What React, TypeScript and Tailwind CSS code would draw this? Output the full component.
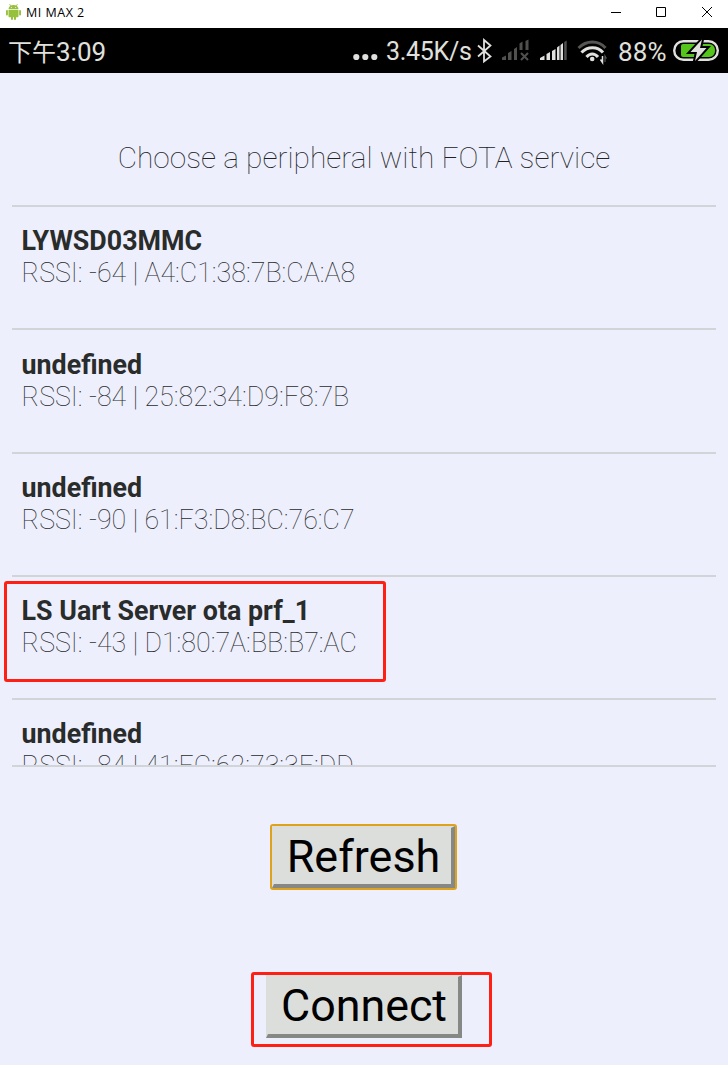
import React from "react";

const devices = [
  { name: "LYWSD03MMC", info: "RSSI: -64 | A4:C1:38:7B:CA:A8" },
  { name: "undefined", info: "RSSI: -84 | 25:82:34:D9:F8:7B" },
  { name: "undefined", info: "RSSI: -90 | 61:F3:D8:BC:76:C7" },
  { name: "LS Uart Server ota prf_1", info: "RSSI: -43 | D1:80:7A:BB:B7:AC", marked: true },
  { name: "undefined", info: "RSSI: -84 | 41:EC:62:73:3E:DD" },
];

function TitleBar() {
  return (
    <div className="flex h-7 items-start bg-white">
      <svg className="ml-[6px] mt-[3px] shrink-0" width="15" height="18" viewBox="0 0 15 18" fill="#97c03d">
        <path d="M3.5 1 4.7 3M11.5 1 10.3 3" stroke="#97c03d" strokeWidth=".8" />
        <path d="M2.5 6.2C2.5 3.6 4.7 2 7.5 2s5 1.6 5 4.2z" />
        <path d="M2.5 7h10v6.3a1 1 0 0 1-1 1H10V16a1 1 0 0 1-2 0v-1.700H7V16a1 1 0 0 1-2 0v-1.700H3.500a1 1 0 0 1-1-1z" />
        <rect x="0" y="7" width="1.900" height="5.500" rx=".9" />
        <rect x="13.100" y="7" width="1.900" height="5.500" rx=".9" />
        <circle cx="5.300" cy="4.400" r=".5" fill="#fff" />
        <circle cx="9.700" cy="4.400" r=".5" fill="#fff" />
      </svg>
      <span className="ml-[5px] mt-[5px] whitespace-nowrap font-['Open_Sans',sans-serif] text-[12.500px] leading-4 tracking-[0.5px] text-black">MI MAX 2</span>
      <svg className="ml-auto mr-[14px] mt-[6px]" width="104" height="12" viewBox="0 0 104 12" fill="none" stroke="#000">
        <path d="M1 6.500h10M46.500 1.500h9v9h-9zM92 1l10 10M102 1 92 11" />
      </svg>
    </div>
  );
}

function StatusBar() {
  return (
    <div className="flex h-[45px] bg-black font-[Roboto,'Noto_Sans_CJK_SC',sans-serif] text-[26px] leading-[48px] text-[#e0e0de]">
      <span className="ml-2 w-[110px] whitespace-nowrap text-[24px] leading-[48px]">下午<span className="text-[26px]">3:09</span></span>
      <svg className="ml-auto shrink-0" width="34" height="45" viewBox="352 28 34 45" fill="#e0e0de">
        <circle cx="356.300" cy="57" r="3.100" />
        <circle cx="365.300" cy="57" r="3.100" />
        <circle cx="374.300" cy="57" r="3.100" />
      </svg>
      <span className="w-[86px] shrink-0 whitespace-nowrap text-[25px] tracking-[-0.3px]">3.45K/s</span>
      <svg className="shrink-0" width="146" height="45" viewBox="472 28 146 45" fill="none">
        <path d="m478 45.500 12.500 11-6.500 5V40l6.500 5.500-12.500 11" stroke="#e0e0de" strokeWidth="1.800" />
        <path d="M502 60v-2.500l4-2V60zM508 60v-7l3.500-2v9zM514 60V49l3-2v13zM519.500 50v-6.500l3-2V50zM525.500 50V41l3-1.500V50z" fill="#50504f" />
        <path d="m521 53 7 7m0-7-7 7" stroke="#50504f" strokeWidth="2" />
        <path d="M540 60v-2l4.500-2.500V60zM546.500 60v-6l3.500-2v8zM552 60v-9l3.500-2v11zM557 60V47.500l2.500-2V60zM560.500 60V45l2.500-2v17z" fill="#e0e0de" />
        <path d="M564.200 60V42l2.500-1.500V60z" fill="#50504f" />
        <path d="M578.500 48c8-8 20-8 27 0" stroke="#555553" strokeWidth="3" />
        <path d="M581.500 52.500c6-6.500 16-6.500 21.500 0M586.500 57c3.500-4 8-4 11.500 0" stroke="#e0e0de" strokeWidth="3" />
        <circle cx="592.200" cy="59" r="2.300" fill="#e0e0de" />
        <path d="M602.500 56v6.500l-2-3" stroke="#e0e0de" strokeWidth="1.500" />
        <path d="M605 62v-6l1.500 2.500" stroke="#555553" strokeWidth="1.200" />
      </svg>
      <span className="w-[54px] shrink-0 whitespace-nowrap tracking-[0.15px]">88%</span>
      <svg className="mr-[8px] shrink-0" width="48" height="45" viewBox="672 28 48 45" fill="none">
        <rect x="674.200" y="41.200" width="43.600" height="18.600" rx="9.300" stroke="#e0e0de" strokeWidth="2.400" />
        <path d="M683 44h26c4 0 6 3 6 6.500s-2 6.500-6 6.500h-26q-2 0-2-2v-9q0-2 2-2z" fill="#55c51b" />
        <path d="M702 39.500 690.500 52h6.500l-2 9 11.500-13h-6.500z" fill="#000" stroke="#000" strokeWidth="4" />
        <path d="M702 39.500 690.500 52h6.500l-2 9 11.500-13h-6.500z" fill="#e0e0de" />
      </svg>
    </div>
  );
}

export default function App() {
  return (
    <div className="flex h-[1065px] w-[728px] flex-col overflow-hidden bg-[#eeeffd] font-[Roboto,sans-serif]">
      <TitleBar />
      <StatusBar />
      <h1 className="h-[132px] pt-[67px] text-center text-[29.850px] font-thin leading-[36px] text-[#202322]">
        Choose a peripheral with FOTA service
      </h1>
      <ul className="mx-3 h-[562px] overflow-hidden border-b-2 border-[#d2d5d7]">
        {devices.map((d, i) => (
          <li key={i} className="relative h-[123.300px] border-t-2 border-[#d2d5d7] pl-[9.600px] pt-[18.300px] text-[26.800px] leading-8 text-[#292c2a]">
            <div className="font-bold">{d.name}</div>
            <div className="font-thin">{d.info}</div>
            {d.marked && (
              <div className="fixed left-1 top-[581px] h-[101px] w-[382px] rounded-[3px] border-3 border-[#fe2015]" />
            )}
          </li>
        ))}
      </ul>
      <div className="mt-[57px] flex justify-center pr-px">
        <button className="h-[66px] w-[187px] rounded-[3px] border-2 border-[#dea21c] text-[44.900px] leading-[58px] text-black">
          <span className="block h-[62px] border-t-2 border-b-4 border-l-2 border-r-4 border-t-[#dcdedb] border-l-[#dcdedb] border-r-[#858884] border-b-[#858884] bg-[#dcdedb] pl-[2px]">Refresh</span>
        </button>
      </div>
      <div className="ml-[251px] mt-[82px] h-[75px] w-[241px] rounded-[3px] border-3 border-[#fe2015] pl-3">
        <button className="block h-[63px] w-[196px] border-t-2 border-b-4 border-l-2 border-r-4 border-t-[#dcdedb] border-l-[#dcdedb] border-r-[#858884] border-b-[#858884] bg-[#dcdedb] pl-[2px] text-[44.800px] leading-[57px] text-black">
          Connect
        </button>
      </div>
    </div>
  );
}
